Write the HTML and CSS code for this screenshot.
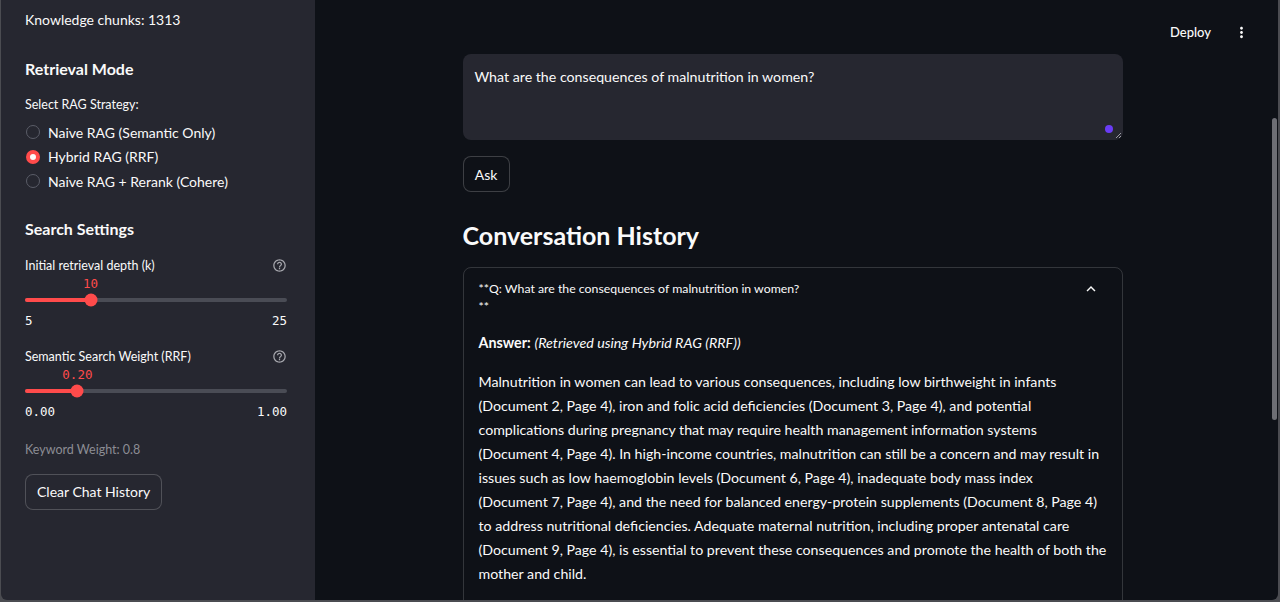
FILE: index.html
```html
<!DOCTYPE html>
<html lang="en">
<head>
<meta charset="utf-8">
<title>RAG Chat</title>
<link rel="stylesheet" href="styles.css">
</head>
<body>
<div class="app">
  <aside class="sidebar">
    <div class="kc">Knowledge chunks: 1313</div>
    <h3 class="sb-h">Retrieval Mode</h3>
    <div class="sb-label">Select RAG Strategy:</div>
    <div class="radios">
      <div class="radio"><span class="rdot"></span>Naive RAG (Semantic Only)</div>
      <div class="radio on"><span class="rdot"></span>Hybrid RAG (RRF)</div>
      <div class="radio"><span class="rdot"></span>Naive RAG + Rerank (Cohere)</div>
    </div>
    <h3 class="sb-h sb-h2">Search Settings</h3>

    <div class="slider">
      <div class="slider-label">
        <span>Initial retrieval depth (k)</span>
        <svg class="help" viewBox="0 0 24 24" width="15" height="15"><path fill="currentColor" d="M11 18h2v-2h-2v2zm1-16C6.48 2 2 6.48 2 12s4.48 10 10 10 10-4.48 10-10S17.52 2 12 2zm0 18c-4.41 0-8-3.59-8-8s3.59-8 8-8 8 3.59 8 8-3.59 8-8 8zm0-14c-2.21 0-4 1.79-4 4h2c0-1.1.9-2 2-2s2 .9 2 2c0 2-3 1.75-3 5h2c0-2.25 3-2.5 3-5 0-2.21-1.79-4-4-4z"/></svg>
      </div>
      <div class="slider-val"><span class="val" style="left:25%">10</span></div>
      <div class="track"><div class="fill" style="width:25%"></div><div class="thumb" style="left:25%"></div></div>
      <div class="minmax"><span>5</span><span>25</span></div>
    </div>

    <div class="slider slider2">
      <div class="slider-label">
        <span>Semantic Search Weight (RRF)</span>
        <svg class="help" viewBox="0 0 24 24" width="15" height="15"><path fill="currentColor" d="M11 18h2v-2h-2v2zm1-16C6.48 2 2 6.48 2 12s4.48 10 10 10 10-4.48 10-10S17.52 2 12 2zm0 18c-4.41 0-8-3.59-8-8s3.59-8 8-8 8 3.59 8 8-3.59 8-8 8zm0-14c-2.21 0-4 1.79-4 4h2c0-1.1.9-2 2-2s2 .9 2 2c0 2-3 1.75-3 5h2c0-2.25 3-2.5 3-5 0-2.21-1.79-4-4-4z"/></svg>
      </div>
      <div class="slider-val"><span class="val" style="left:20%">0.20</span></div>
      <div class="track"><div class="fill" style="width:20%"></div><div class="thumb" style="left:20%"></div></div>
      <div class="minmax"><span>0.00</span><span>1.00</span></div>
    </div>

    <div class="caption">Keyword Weight: 0.8</div>
    <button class="btn clear">Clear Chat History</button>
  </aside>

  <main class="main">
    <header class="topbar">
      <span class="deploy">Deploy</span>
      <svg class="kebab" viewBox="0 0 24 24" width="17" height="17"><path fill="currentColor" d="M12 8c1.1 0 2-.9 2-2s-.9-2-2-2-2 .9-2 2 .9 2 2 2zm0 2c-1.1 0-2 .9-2 2s.9 2 2 2 2-.9 2-2-.9-2-2-2zm0 6c-1.1 0-2 .9-2 2s.9 2 2 2 2-.9 2-2-.9-2-2-2z"/></svg>
    </header>

    <div class="content">
      <div class="ta">
        <div class="ta-text">What are the consequences of malnutrition in women?</div>
        <span class="ta-dot"></span>
        <svg class="ta-grip" viewBox="0 0 8 8" width="8" height="8"><path d="M7 2L2 7M7 5L5 7" stroke="#9a9ba3" stroke-width="1" fill="none"/></svg>
      </div>
      <button class="btn ask">Ask</button>
      <h2 class="h2">Conversation History</h2>

      <div class="exp">
        <div class="exp-head">
          <div class="q">**Q: What are the consequences of malnutrition in women?<br>**</div>
          <svg class="chev" viewBox="0 0 24 24" width="18" height="18"><path fill="currentColor" d="M12 8l-6 6 1.41 1.41L12 10.83l4.59 4.58L18 14z"/></svg>
        </div>
        <div class="exp-body">
          <p class="ans"><b>Answer:</b> <i>(Retrieved using Hybrid RAG (RRF))</i></p>
          <p class="para">Malnutrition in women can lead to various consequences, including low birthweight in infants<br>(Document 2, Page 4), iron and folic acid deficiencies (Document 3, Page 4), and potential<br>complications during pregnancy that may require health management information systems<br>(Document 4, Page 4). In high-income countries, malnutrition can still be a concern and may result in<br>issues such as low haemoglobin levels (Document 6, Page 4), inadequate body mass index<br>(Document 7, Page 4), and the need for balanced energy-protein supplements (Document 8, Page 4)<br>to address nutritional deficiencies. Adequate maternal nutrition, including proper antenatal care<br>(Document 9, Page 4), is essential to prevent these consequences and promote the health of both the<br>mother and child.</p>
        </div>
      </div>
    </div>
    <div class="scroll-thumb"></div>
  </main>
</div>
</body>
</html>
```

FILE: styles.css
```css
* { box-sizing: border-box; }

html, body {
  margin: 0;
  padding: 0;
  height: 602px;
  overflow: hidden;
}

body {
  background: #4b4c51;
  font-family: Lato, "Liberation Sans", sans-serif;
  color: #fafafa;
}

.app {
  display: flex;
  width: 1277px;
  height: 600px;
  margin-left: 1px;
  border-radius: 0 0 6px 6px;
  overflow: hidden;
}

/* ---------- Sidebar ---------- */
.sidebar {
  flex: 0 0 314px;
  background: #262730;
  padding: 10px 28px 0 24px;
  display: flex;
  flex-direction: column;
  align-items: stretch;
}

.kc {
  font-size: 14px;
  line-height: 20px;
}

.sb-h {
  margin: 27px 0 0;
  font-size: 16px;
  font-weight: 700;
  line-height: 24px;
}

.sb-h2 { margin-top: 23px; }

.sb-label {
  margin-top: 15px;
  font-size: 12.5px;
  line-height: 18px;
}

.radios {
  margin-top: 6px;
  display: flex;
  flex-direction: column;
}

.radio {
  display: flex;
  align-items: center;
  height: 24.5px;
  font-size: 14px;
}

.rdot {
  width: 14px;
  height: 14px;
  border-radius: 50%;
  border: 1px solid #5b5d68;
  background: #262730;
  margin: 0 8px 0 1px;
  flex: 0 0 auto;
}

.radio.on .rdot {
  border: 4.5px solid #ff4b4b;
  background: #fafafa;
}

.slider { margin-top: 16px; }
.slider2 { margin-top: 19px; }

.slider-label {
  display: flex;
  justify-content: space-between;
  align-items: center;
  height: 18px;
  font-size: 12.5px;
}

.help {
  color: #a6a7ad;
}

.slider-val {
  position: relative;
  height: 17px;
}

.val {
  position: absolute;
  top: 1px;
  transform: translateX(-50%);
  font-family: "DejaVu Sans Mono", "Liberation Mono", monospace;
  font-size: 12.5px;
  line-height: 16px;
  color: #ff4b4b;
}

.track {
  position: relative;
  height: 4px;
  margin: 6px 0;
  border-radius: 2px;
  background: #4a4c55;
}

.fill {
  height: 4px;
  border-radius: 2px;
  background: #ff4b4b;
}

.thumb {
  position: absolute;
  top: 50%;
  width: 13px;
  height: 13px;
  border-radius: 50%;
  background: #ff4b4b;
  transform: translate(-50%, -50%);
}

.minmax {
  display: flex;
  justify-content: space-between;
  margin-top: 11px;
  height: 16px;
  font-family: "DejaVu Sans Mono", "Liberation Mono", monospace;
  font-size: 12.5px;
  line-height: 16px;
}

.caption {
  margin-top: 21px;
  font-size: 12.5px;
  line-height: 18px;
  color: #8c8d94;
}

.btn {
  font-family: Lato, "Liberation Sans", sans-serif;
  color: #fafafa;
  background: transparent;
  border: 1px solid rgba(250, 250, 250, 0.2);
  border-radius: 8px;
  font-size: 14px;
  height: 37px;
  padding: 0 12px;
  white-space: nowrap;
  cursor: pointer;
}

.clear {
  margin-top: 15px;
  align-self: flex-start;
  background: #262730;
  padding: 0 11px;
  height: 36px;
}

/* ---------- Main ---------- */
.main {
  position: relative;
  flex: 1 1 auto;
  background: #0e1117;
  padding-right: 8px;
}

.topbar {
  display: flex;
  justify-content: flex-end;
  align-items: center;
  height: 54px;
  padding: 10px 20px 0 0;
  gap: 22px;
}

.deploy {
  font-size: 13px;
  font-weight: 500;
}

.kebab { color: #fafafa; }

.content {
  width: 660px;
  margin: 0 auto;
  display: flex;
  flex-direction: column;
  align-items: flex-start;
}

.ta {
  position: relative;
  width: 100%;
  height: 86px;
  background: #262730;
  border-radius: 8px;
  padding: 13px 12px;
}

.ta-text {
  font-size: 14.2px;
  line-height: 20px;
}

.ta-dot {
  position: absolute;
  right: 10px;
  bottom: 7px;
  width: 8px;
  height: 8px;
  border-radius: 50%;
  background: #6a3cf5;
}

.ta-grip {
  position: absolute;
  right: 1px;
  bottom: 1px;
}

.ask {
  margin-top: 16px;
  width: 47px;
  height: 36px;
  padding: 0;
  background: #0e1117;
}

.h2 {
  margin: 23px 0 0;
  font-size: 25px;
  font-weight: 700;
  line-height: 40px;
}

.exp {
  margin-top: 12px;
  width: 100%;
  height: 400px;
  border: 1px solid rgba(250, 250, 250, 0.16);
  border-radius: 8px;
  padding: 0 15px;
}

.exp-head {
  display: flex;
  justify-content: space-between;
  align-items: flex-start;
  padding-top: 12px;
}

.q {
  font-size: 12.3px;
  line-height: 17.5px;
}

.chev {
  color: #fafafa;
  margin: 0 7px 0 0;
}

.exp-body { padding-top: 16px; }

.ans {
  margin: 0;
  font-size: 14.3px;
  line-height: 24px;
}

.para {
  margin: 15px 0 0;
  font-size: 14.2px;
  line-height: 24px;
  white-space: nowrap;
}

.scroll-thumb {
  position: absolute;
  right: 1px;
  top: 118px;
  width: 5px;
  height: 302px;
  border-radius: 3px;
  background: #6d6e74;
}
```
